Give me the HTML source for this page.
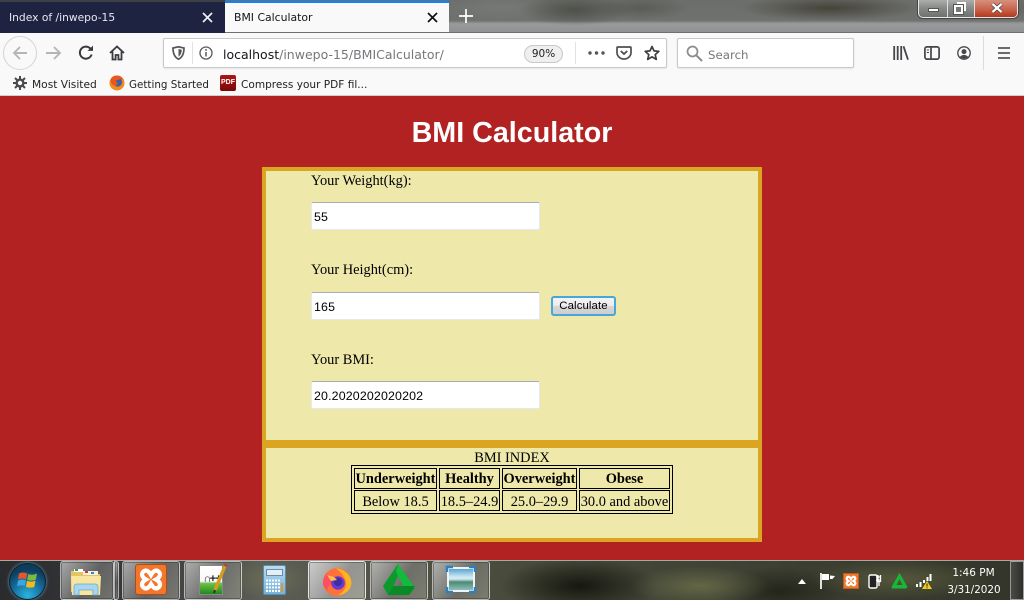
<!DOCTYPE html>
<html lang="en"><head><meta charset="utf-8"><title>BMI Calculator</title>
<style>
*{box-sizing:border-box}
html,body{margin:0;padding:0;width:1024px;height:600px;overflow:hidden;background:#b22222}
body{position:relative;font-family:"Liberation Sans",sans-serif}
.a{position:absolute}
.ui{font-family:"DejaVu Sans","Liberation Sans",sans-serif;white-space:nowrap}
.s{font-family:"Liberation Serif",serif;font-size:14.4px;color:#000;white-space:nowrap;line-height:17px}
svg{position:absolute;overflow:visible}
.inp{position:absolute;left:311px;width:229px;height:28px;background:#fff;border:1px solid #e3e9ef;border-top-color:#abadb3;border-radius:2px;font:12.4px/28px "Liberation Sans",sans-serif;padding-left:2px;color:#000;letter-spacing:.15px}
.tb{position:absolute;top:561px;height:39px;border-radius:3px;border:1px solid rgba(235,235,235,.55);background:linear-gradient(125deg,rgba(215,215,215,.72),rgba(140,140,140,.5) 55%,rgba(165,165,150,.55));box-shadow:inset 0 0 0 1px rgba(30,30,30,.35)}
td,th{position:absolute;border:1px solid #000;font-family:"Liberation Serif",serif;font-size:14.4px;text-align:center;padding:0;white-space:nowrap;display:block}
th{line-height:21px}
td{line-height:22px}
</style></head><body>

<!-- window title wallpaper -->
<div class="a" style="left:0;top:0;width:1024px;height:33px;background:
 radial-gradient(ellipse 55px 16px at 575px 10px,#4e504a,transparent),
 radial-gradient(ellipse 50px 12px at 640px 8px,#5a5c57,transparent),
 radial-gradient(ellipse 90px 13px at 830px 8px,#45443a,transparent),
 radial-gradient(ellipse 60px 12px at 980px 8px,#55564c,transparent),
 radial-gradient(ellipse 60px 14px at 500px 8px,#777976,transparent),
 linear-gradient(#6c6e6b 0,#6f716f 62%,#989a9c 72%,#8f9092 100%)"></div>
<div class="a" style="left:0;top:0;width:225px;height:2px;background:#3d4045"></div>
<div class="a" style="left:0;top:2px;width:225px;height:31px;background:#1f2342"></div>
<div class="a ui" style="left:9px;top:10px;font-size:10.7px;line-height:16px;color:#e8e8ee">Index of /inwepo-15</div>
<svg style="left:202px;top:12px" width="11" height="11" viewBox="0 0 11 11"><path d="M1 1L10 10M10 1L1 10" stroke="#f0f0f4" stroke-width="1.7" fill="none"/></svg>
<div class="a" style="left:225px;top:1px;width:224px;height:32px;background:#f9f9fa;border-top:2px solid #0a84ff"></div>
<div class="a ui" style="left:234px;top:10px;font-size:10.85px;line-height:16px;color:#15141a">BMI Calculator</div>
<svg style="left:427px;top:12px" width="11" height="11" viewBox="0 0 11 11"><path d="M1 1L10 10M10 1L1 10" stroke="#111" stroke-width="1.7" fill="none"/></svg>
<svg style="left:459px;top:9px" width="14" height="14" viewBox="0 0 14 14"><path d="M7 0V14M0 7H14" stroke="#fff" stroke-width="1.7"/></svg>

<!-- window controls -->
<div class="a" style="left:918px;top:-2px;width:100px;height:20px;border:1px solid #e8e8e8;border-top:none;border-radius:0 0 5px 5px;background:linear-gradient(#b6b7b6,#8a8c8a 50%,#6d706e);overflow:hidden;box-shadow:0 0 0 1px #444">
 <div class="a" style="left:28px;top:0;width:1px;height:20px;background:#ddd"></div>
 <div class="a" style="left:55px;top:0;width:1px;height:20px;background:#ddd"></div>
 <div class="a" style="left:56px;top:0;width:44px;height:20px;background:linear-gradient(#d89a8a,#cb6a52 50%,#b23317)"></div>
 <div class="a" style="left:9px;top:10px;width:11px;height:4px;background:#fff;border:1px solid #555"></div>
 <div class="a" style="left:38px;top:4px;width:9px;height:9px;border:2px solid #fff;outline:1px solid #555;outline-offset:-3px"></div>
 <div class="a" style="left:35px;top:7px;width:9px;height:9px;border:2px solid #fff;background:#777;outline:1px solid #555"></div>
 <svg style="left:72px;top:5px" width="12" height="10" viewBox="0 0 12 10"><path d="M1.5 1L10.5 9M10.5 1L1.5 9" stroke="#444" stroke-width="3.6"/><path d="M1.5 1L10.5 9M10.5 1L1.5 9" stroke="#fff" stroke-width="2.2"/></svg>
</div>

<!-- nav toolbar -->
<div class="a" style="left:0;top:33px;width:1024px;height:63px;background:#f9f9fa"></div>
<div class="a" style="left:225px;top:32px;width:799px;height:1px;background:#6f7076"></div>
<div class="a" style="left:3px;top:36px;width:34px;height:34px;border:1px solid #d4d4d6;border-radius:50%;background:#f9f9fa"></div>
<svg style="left:12px;top:45px" width="16" height="16" viewBox="0 0 16 16"><path d="M15 8H2M8 2L2 8L8 14" stroke="#b5b5b7" stroke-width="1.9" fill="none"/></svg>
<svg style="left:45px;top:45px" width="17" height="16" viewBox="0 0 17 16"><path d="M1 8H15M9 2L15 8L9 14" stroke="#b5b5b7" stroke-width="1.9" fill="none"/></svg>
<svg style="left:78px;top:45px" width="16" height="16" viewBox="0 0 16 16"><path d="M13.6 9.5A6 6 0 1 1 12.3 3.6" stroke="#3a3a3e" stroke-width="2" fill="none"/><path d="M9.5 5.9H15V.6z" fill="#3a3a3e"/></svg>
<svg style="left:109px;top:45px" width="16" height="16" viewBox="0 0 16 16"><path d="M1 8L8 1.5L15 8M3.5 6.5V14.5H6.6V10H9.4V14.5H12.5V6.5" stroke="#3a3a3e" stroke-width="1.8" fill="none"/></svg>

<!-- url bar -->
<div class="a" style="left:163px;top:38px;width:504px;height:30px;background:#fff;border:1px solid #c8c8ca;border-radius:2px;box-shadow:0 1px 2px rgba(0,0,0,.08)"></div>
<svg style="left:172px;top:46px" width="13" height="14" viewBox="0 0 13 14"><path d="M1 2L6.500 .8L12 2C12 8 10 11.500 6.500 13.200C3 11.500 1 8 1 2Z" stroke="#55555a" stroke-width="1.700" fill="none"/><path d="M6.500 3L9.800 3.700C9.700 7 8.500 9.300 6.500 10.600Z" fill="#55555a"/></svg>
<div class="a" style="left:192px;top:42px;width:1px;height:22px;background:#e2e2e3"></div>
<svg style="left:199px;top:46px" width="14" height="14" viewBox="0 0 14 14"><circle cx="7" cy="7" r="6" stroke="#5a5a5e" stroke-width="1.300" fill="none"/><path d="M7 6V10.500" stroke="#5a5a5e" stroke-width="1.500"/><circle cx="7" cy="3.900" r=".95" fill="#5a5a5e"/></svg>
<div class="a ui" style="left:223px;top:46px;font-size:12.5px;line-height:18px;color:#15141a">localhost<span style="color:#77777c">/inwepo-15/BMICalculator/</span></div>
<div class="a ui" style="left:524px;top:45px;width:39px;height:18px;border:1px solid #c8c8c9;border-radius:9px;background:#efeff0;font-size:10.5px;line-height:17px;text-align:center;color:#222">90%</div>
<div class="a" style="left:575px;top:42px;width:1px;height:22px;background:#e2e2e3"></div>
<svg style="left:588px;top:51px" width="17" height="4" viewBox="0 0 17 4"><circle cx="2" cy="2" r="1.700" fill="#55555a"/><circle cx="8.500" cy="2" r="1.700" fill="#55555a"/><circle cx="15" cy="2" r="1.700" fill="#55555a"/></svg>
<svg style="left:616px;top:46px" width="16" height="14" viewBox="0 0 16 14"><path d="M1 1.800Q1 1 2 1H14Q15 1 15 1.800V6.500A7 6.500 0 0 1 1 6.500Z" stroke="#4e4e52" stroke-width="1.700" fill="none"/><path d="M4.800 5L8 8L11.200 5" stroke="#4e4e52" stroke-width="1.800" fill="none"/></svg>
<svg style="left:644px;top:45px" width="16" height="16" viewBox="0 0 16 16"><path d="M8 1.500L10 5.900L14.800 6.400L11.200 9.600L12.300 14.400L8 11.900L3.700 14.400L4.800 9.600L1.200 6.400L6 5.900Z" stroke="#3f3f43" stroke-width="1.700" fill="none" stroke-linejoin="round"/></svg>

<!-- search -->
<div class="a" style="left:677px;top:38px;width:177px;height:30px;background:#fff;border:1px solid #c8c8ca;border-radius:2px;box-shadow:0 1px 2px rgba(0,0,0,.08)"></div>
<svg style="left:686px;top:45px" width="17" height="17" viewBox="0 0 17 17"><circle cx="6.500" cy="6.500" r="5" stroke="#8a8a8e" stroke-width="1.700" fill="none"/><path d="M10.300 10.300L16 16" stroke="#8a8a8e" stroke-width="2"/></svg>
<div class="a ui" style="left:708px;top:46px;font-size:11.800px;line-height:18px;color:#77777c">Search</div>

<!-- right icons -->
<svg style="left:893px;top:46px" width="16" height="14" viewBox="0 0 16 14"><path d="M1.200 0V14M4.700 0V14M8.200 0V14M10.500 .3L15 13.700" stroke="#46464a" stroke-width="1.800" fill="none"/></svg>
<svg style="left:924px;top:46px" width="16" height="14" viewBox="0 0 16 14"><rect x=".9" y=".9" width="14.200" height="12.200" rx="2" stroke="#46464a" stroke-width="1.700" fill="none"/><path d="M7 1V13" stroke="#46464a" stroke-width="1.700"/><path d="M2.800 4H5M2.800 6.500H5" stroke="#46464a" stroke-width="1.100"/></svg>
<svg style="left:957px;top:46px" width="14" height="14" viewBox="0 0 14 14"><circle cx="7" cy="7" r="6.200" stroke="#46464a" stroke-width="1.300" fill="none"/><circle cx="7" cy="5.600" r="2.500" fill="#46464a"/><path d="M2.800 11Q7 6.800 11.200 11Q7 14.200 2.800 11Z" fill="#46464a"/></svg>
<div class="a" style="left:983px;top:36px;width:1px;height:34px;background:#dcdcde"></div>
<svg style="left:998px;top:47px" width="12" height="12" viewBox="0 0 12 12"><path d="M0 1H12M0 6H12M0 11H12" stroke="#3c3c40" stroke-width="1.600"/></svg>

<!-- bookmarks -->
<svg style="left:13px;top:76px" width="14" height="14" viewBox="0 0 14 14"><circle cx="7" cy="7" r="3.400" stroke="#4a4a4e" stroke-width="2.400" fill="none"/><path d="M7 0V3M7 11V14M0 7H3M11 7H14M2 2L4 4M10 10L12 12M12 2L10 4M4 10L2 12" stroke="#4a4a4e" stroke-width="2"/></svg>
<div class="a ui" style="left:32px;top:77px;font-size:10.65px;line-height:16px;color:#222">Most Visited</div>
<svg style="left:109px;top:75px" width="16" height="16" viewBox="0 0 16 16"><circle cx="8" cy="8" r="7.500" fill="#f28a1e"/><circle cx="8.500" cy="7" r="4.600" fill="#3b5fa8"/><path d="M1.500 5C2 2 5 .5 8 .5C11 .5 14 2.500 15 5.500C13 3.500 11 3.700 9 5.200C7 4 6.500 6 8 7.500C10 9 7 12 4 10C2.500 9 1.500 7 1.500 5Z" fill="#e8571f"/></svg>
<div class="a ui" style="left:129px;top:77px;font-size:10.35px;line-height:16px;color:#222">Getting Started</div>
<div class="a" style="left:220px;top:75px;width:16px;height:16px;border-radius:2px;background:linear-gradient(#b01515,#7c0808)"></div>
<div class="a" style="left:220px;top:79px;width:16px;height:8px;font:bold 7px/8px 'Liberation Sans',sans-serif;color:#fff;text-align:center">PDF</div>
<div class="a ui" style="left:241px;top:77px;font-size:10.55px;line-height:16px;color:#222">Compress your PDF fil...</div>

<!-- page -->
<div class="a" style="left:0;top:95px;width:1024px;height:1px;background:#cfcfd0"></div>
<div class="a" style="left:0;top:96px;width:1024px;height:464px;background:#b22222"></div>
<div class="a" style="left:0;top:116px;width:1024px;text-align:center;font:bold 28.7px/34px 'Liberation Sans',sans-serif;color:#fff">BMI Calculator</div>

<div class="a" style="left:262px;top:167px;width:500px;height:375px;background:#eee8aa;border:4px solid #daa520"></div>
<div class="a" style="left:262px;top:440px;width:500px;height:8px;background:#daa520"></div>

<div class="a s" style="left:311px;top:173px">Your Weight(kg):</div>
<div class="inp" style="top:202px">55</div>
<div class="a s" style="left:311px;top:262px">Your Height(cm):</div>
<div class="inp" style="top:292px">165</div>
<div class="a" style="left:551px;top:296px;width:65px;height:20px;border:2px solid #4aa5d8;border-radius:3px;background:linear-gradient(#f4f4f4,#ececec 48%,#d6d6d6 52%,#cfcfcf);font:11.4px/17px 'Liberation Sans',sans-serif;text-align:center;color:#000;letter-spacing:.1px;white-space:nowrap">Calculate</div>
<div class="a s" style="left:311px;top:352px">Your BMI:</div>
<div class="inp" style="top:381px">20.2020202020202</div>

<div class="a s" style="left:262px;top:450px;width:500px;text-align:center">BMI INDEX</div>
<table class="a" style="left:351px;top:465px;width:322px;height:49px;border:1px solid #000;border-spacing:0;display:block">
<tbody style="display:block"><tr style="display:block">
<th style="left:2px;top:2px;width:83px;height:21px">Underweight</th>
<th style="left:87px;top:2px;width:61px;height:21px">Healthy</th>
<th style="left:150px;top:2px;width:75px;height:21px">Overweight</th>
<th style="left:227px;top:2px;width:91px;height:21px">Obese</th>
</tr><tr style="display:block">
<td style="left:2px;top:24px;width:83px;height:21px">Below 18.5</td>
<td style="left:87px;top:24px;width:61px;height:21px">18.5–24.9</td>
<td style="left:150px;top:24px;width:75px;height:21px">25.0–29.9</td>
<td style="left:227px;top:24px;width:91px;height:21px">30.0 and above</td>
</tr></tbody></table>

<!-- taskbar -->
<div class="a" style="left:0;top:560px;width:1024px;height:40px;border-top:1px solid #a9a99f;background:
 radial-gradient(ellipse 70px 20px at 700px 25px,#636745,transparent),
 radial-gradient(ellipse 80px 28px at 580px 25px,#16170f,transparent),
 radial-gradient(ellipse 90px 20px at 900px 18px,#54573a,transparent),
 radial-gradient(ellipse 70px 24px at 780px 30px,#23251a,transparent),
 radial-gradient(ellipse 40px 20px at 270px 18px,#6a6c54,transparent),
 linear-gradient(90deg,#2a2b2e 0,#3a3b3d 150px,#5c5d55 260px,#4a4c3d 480px,#33352a 1024px)"></div>

<!-- start orb -->
<div class="a" style="left:9px;top:563px;width:37px;height:37px;border-radius:50%;border:1px solid #0c2433;background:radial-gradient(circle at 50% 90%,#2bb4dc 0,#1670a0 40%,#0d3e60 72%,#16364e);box-shadow:0 0 3px #6fa6bf"></div>
<svg style="left:18px;top:570px" width="20" height="20" viewBox="0 0 20 20"><path d="M1 3.500Q5 1.500 9.300 3.500L8 9.300Q4.500 7.500 0 9.500Z" fill="#e8552c"/><path d="M10.300 4Q14.500 5.800 19 3.500L17.800 9.800Q13.500 11.500 9.200 9.700Z" fill="#7cb93c"/><path d="M0 10.500Q4 8.700 8 10.300L6.800 16Q3 14.500 -1 16.300Z" fill="#3ba5e0"/><path d="M9 10.800Q13.200 12.500 17.500 10.800L16.300 17Q12 18.500 7.900 16.700Z" fill="#f5b81f"/></svg>

<div class="tb" style="left:60px;width:54px"></div>
<div class="tb" style="left:114px;width:5px;border-radius:0 3px 3px 0"></div>
<div class="tb" style="left:122px;width:58px"></div>
<div class="tb" style="left:184px;width:58px"></div>
<div class="tb" style="left:308px;width:58px;border-color:rgba(245,245,245,.85);background:linear-gradient(125deg,rgba(225,225,225,.85),rgba(175,175,175,.7) 55%,rgba(190,190,175,.7))"></div>
<div class="tb" style="left:370px;width:58px"></div>
<div class="tb" style="left:432px;width:58px"></div>

<!-- explorer -->
<svg style="left:70px;top:566px" width="32" height="30" viewBox="0 0 32 30"><path d="M1 5H14L16 8H30V26H1Z" fill="#e4c465"/><rect x="4" y="3" width="9" height="3" fill="#fff"/><rect x="5" y="3" width="3" height="2" fill="#29a83c"/><rect x="13" y="5" width="15" height="4" fill="#f6f2e2"/><rect x="15" y="5" width="3" height="2" fill="#d03a2a"/><rect x="21" y="6" width="3" height="2" fill="#2a88d8"/><path d="M1 10H31L30 29H2Z" fill="#f7e5a0"/><path d="M4 29V21Q4 18 7 18H25Q28 18 28 21V29H23V24H9V29Z" fill="#a6d6f0" stroke="#6ea9cc" stroke-width=".8"/></svg>
<!-- xampp -->
<div class="a" style="left:135px;top:564px;width:32px;height:31px;border-radius:3px;background:#f2762b;border:1px solid #a84e1a"></div>
<svg style="left:138px;top:567px" width="26" height="25" viewBox="0 0 26 25"><path d="M5 5Q9 1 13 8Q17 1 21 5Q24 9 18 12.500Q24 16 21 20Q17 24 13 17Q9 24 5 20Q2 16 8 12.500Q2 9 5 5Z" stroke="#fff" stroke-width="4.200" fill="none"/></svg>
<!-- notepad++ -->
<div class="a" style="left:199px;top:565px;width:24px;height:30px;background:linear-gradient(#fff 0,#f8f8f8 55%,#6fc04a 62%,#1d8a1d 100%);border:1px solid #888"></div>
<div class="a" style="left:204px;top:574px;font:bold 11px/12px 'Liberation Mono',monospace;color:#222;letter-spacing:-1px">∩++</div>
<svg style="left:212px;top:564px" width="15" height="30" viewBox="0 0 15 30"><path d="M13 2L3 26" stroke="#d89b22" stroke-width="3.400"/><path d="M13 2L14 .5" stroke="#b43a3a" stroke-width="3.400"/><path d="M3 26L2 29" stroke="#333" stroke-width="2"/></svg>
<!-- calc -->
<div class="a" style="left:263px;top:565px;width:23px;height:30px;border-radius:2px;background:linear-gradient(#b9dcf2,#72b2dc);border:1px solid #5a8eb0"></div>
<div class="a" style="left:266px;top:569px;width:17px;height:7px;background:#e4eef4;border:1px solid #6b8ea5"></div>
<svg style="left:266px;top:579px" width="17" height="13" viewBox="0 0 17 13"><path d="M0 1.500H14M0 5H14M0 8.500H14M0 12H14" stroke="#fff" stroke-width="2" stroke-dasharray="2 1"/><rect x="15" y="4" width="2" height="9" fill="#e8912c"/></svg>
<!-- firefox -->
<svg style="left:321px;top:564px" width="32" height="32" viewBox="0 0 32 32"><circle cx="16" cy="18" r="14" fill="#ff7139"/><path d="M15 4C20 5 30 8 30.500 19C30 26 24 31 17 31C26 27 27 17 22 12C21 9 18 7 15 4Z" fill="#ffb320"/><path d="M2 19C2 14 4 11 7 9.500C7 12 9 12.500 11 12.500C14 12.500 16 12 18 13C13 11 9 15 11 20C8 21 5 24 8 27C4 25 2 22 2 19Z" fill="#ff4f5e"/><circle cx="17" cy="19" r="6.800" fill="#6a3ad0"/><circle cx="17" cy="18" r="4.200" fill="#3d2fa0"/><path d="M6 11L13 13L16 16L10 17Z" fill="#ffbd4f"/></svg>
<!-- green triangle -->
<svg style="left:383px;top:564px" width="32" height="32" viewBox="0 0 32 32"><path fill-rule="evenodd" d="M15 0L32 24L26 31H5L0 22ZM15 12L10.500 22H21.500Z" fill="#0c9a2c"/><path d="M15 0L32 24H21.500L15 12L13 7Z" fill="#12bb3a"/><path d="M0 22L10 .0L15 0L5 31Z" fill="#0a8a27" opacity="0"/><path d="M5 31L10.500 22H32L26 31Z" fill="#0a8a27"/></svg>
<!-- photo -->
<div class="a" style="left:447px;top:567px;width:28px;height:25px;background:linear-gradient(#5aa5d5 0,#cfe8f2 38%,#cfe8f2 48%,#4d8a70 62%,#8cc0bd 100%);border:2px solid #eef3f7"></div>
<svg style="left:446px;top:566px" width="30" height="27" viewBox="0 0 30 27"><path d="M1 6V1H7M23 1H29V6M1 21V26H7M23 26H29V21" stroke="#2f7fc0" stroke-width="2.400" fill="none"/></svg>

<!-- tray -->
<svg style="left:798px;top:579px" width="8" height="5" viewBox="0 0 8 5"><path d="M4 0L8 5H0Z" fill="#fff"/></svg>
<svg style="left:820px;top:573px" width="15" height="16" viewBox="0 0 15 16"><path d="M1 0V16" stroke="#fff" stroke-width="1.700"/><path d="M2 1H9V7H2ZM10 2.500L15 3L12.500 6H10Z" fill="#fff"/></svg>
<div class="a" style="left:843px;top:573px;width:16px;height:16px;background:#f2762b;border:1px solid #c05a1a"></div>
<svg style="left:845px;top:575px" width="12" height="12" viewBox="0 0 24 24"><path d="M4 5Q8 1 12 8Q16 1 20 5Q22 9 17 12Q22 15 20 19Q16 23 12 16Q8 23 4 19Q2 15 7 12Q2 9 4 5Z" stroke="#fff" stroke-width="4.500" fill="none"/></svg>
<svg style="left:868px;top:572px" width="14" height="17" viewBox="0 0 14 17"><rect x="1" y="3" width="8" height="13" rx="1.500" stroke="#fff" stroke-width="1.400" fill="#222"/><path d="M8 5H13M8 8H13M10 3V9.500H12.500V3M11 10V14" stroke="#fff" stroke-width="1.300" fill="none"/></svg>
<svg style="left:891px;top:572px" width="17" height="17" viewBox="0 0 17 17"><path fill-rule="evenodd" d="M8.500 1L16.500 15L15 16.500H1L.5 15ZM8.500 7L5.500 13H11.500Z" fill="#16b83a"/></svg>
<svg style="left:915px;top:574px" width="17" height="15" viewBox="0 0 17 15"><path d="M1 10H3V13H1ZM4.500 8H6.500V13H4.500ZM8 6H10V9H8ZM11.500 3H13.500V7H11.500ZM14.500 0H16.500V7H14.500Z" fill="#fff"/><path d="M12 7L17 15H7Z" fill="#f1cf1e"/><path d="M12 9.500V12.500M12 13.300V14.300" stroke="#222" stroke-width="1"/></svg>

<div class="a ui" style="left:940px;top:565px;width:67px;text-align:center;font-size:10.5px;line-height:16px;color:#fff">1:46 PM</div>
<div class="a ui" style="left:941px;top:582px;width:66px;text-align:center;font-size:10.4px;line-height:16px;color:#fff">3/31/2020</div>
<div class="a" style="left:1010px;top:561px;width:14px;height:39px;border:1px solid rgba(220,220,220,.6);background:linear-gradient(90deg,#4a4a47,#2e2f2a)"></div>
</body></html>
